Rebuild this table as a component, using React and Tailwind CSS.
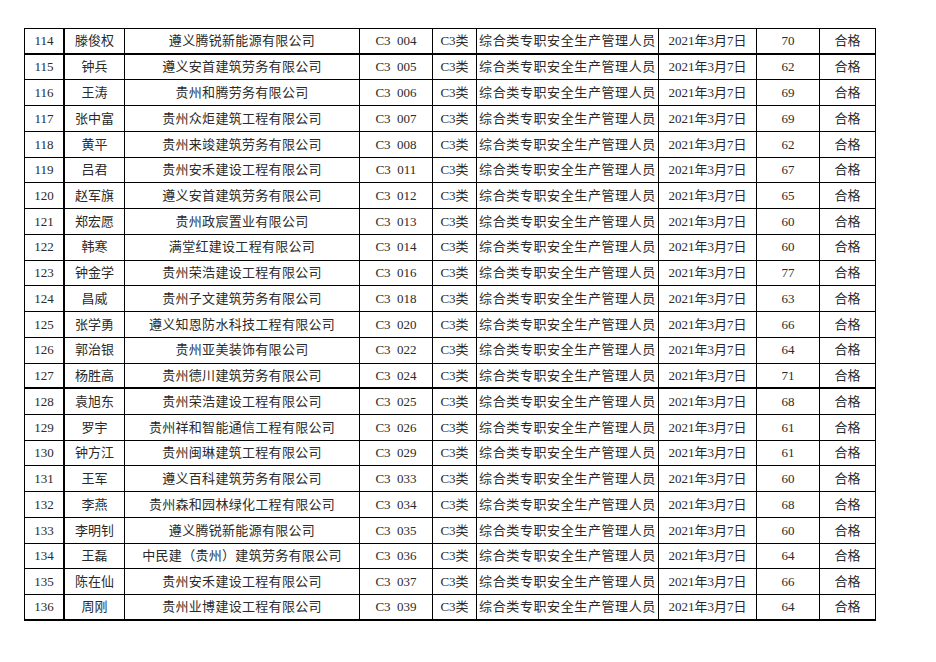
import React from "react";

const rows = [
  ["114", "滕俊权", "遵义腾锐新能源有限公司", "004", "70"],
  ["115", "钟兵", "遵义安首建筑劳务有限公司", "005", "62"],
  ["116", "王涛", "贵州和腾劳务有限公司", "006", "69"],
  ["117", "张中富", "贵州众炬建筑工程有限公司", "007", "69"],
  ["118", "黄平", "贵州来竣建筑劳务有限公司", "008", "62"],
  ["119", "吕君", "贵州安禾建设工程有限公司", "011", "67"],
  ["120", "赵军旗", "遵义安首建筑劳务有限公司", "012", "65"],
  ["121", "郑宏愿", "贵州政宸置业有限公司", "013", "60"],
  ["122", "韩寒", "满堂红建设工程有限公司", "014", "60"],
  ["123", "钟金学", "贵州荣浩建设工程有限公司", "016", "77"],
  ["124", "昌威", "贵州子文建筑劳务有限公司", "018", "63"],
  ["125", "张学勇", "遵义知恩防水科技工程有限公司", "020", "66"],
  ["126", "郭治银", "贵州亚美装饰有限公司", "022", "64"],
  ["127", "杨胜高", "贵州德川建筑劳务有限公司", "024", "71"],
  ["128", "袁旭东", "贵州荣浩建设工程有限公司", "025", "68"],
  ["129", "罗宇", "贵州祥和智能通信工程有限公司", "026", "61"],
  ["130", "钟方江", "贵州闽琳建筑工程有限公司", "029", "61"],
  ["131", "王军", "遵义百科建筑劳务有限公司", "033", "60"],
  ["132", "李燕", "贵州森和园林绿化工程有限公司", "034", "68"],
  ["133", "李明钊", "遵义腾锐新能源有限公司", "035", "60"],
  ["134", "王磊", "中民建（贵州）建筑劳务有限公司", "036", "64"],
  ["135", "陈在仙", "贵州安禾建设工程有限公司", "037", "66"],
  ["136", "周刚", "贵州业博建设工程有限公司", "039", "64"],
];

// rows followed by a heavier rule
const thick = ["114", "127", "136"];

export default function App() {
  return (
    <div
      className="w-[936px] h-[662px] bg-white pt-[28px] pl-[24px] text-[13px] text-[#2a2a2a] whitespace-nowrap"
      style={{ fontFamily: '"Liberation Serif", "Noto Sans CJK SC", serif' }}
    >
      <div className="w-[852px] border-l border-t border-black">
        {rows.map((r) => (
          <div
            key={r[0]}
            className={`flex h-[25.74px] border-black ${thick.includes(r[0]) ? "border-b-2" : "border-b"}`}
          >
            <div className="w-[40px] shrink-0 flex items-center justify-center border-r-2 border-black">{r[0]}</div>
            <div className="w-[60px] shrink-0 flex items-center justify-center border-r border-black">{r[1]}</div>
            <div className="w-[235px] shrink-0 flex items-center justify-center border-r border-black tracking-[0.3px]">{r[2]}</div>
            <div className="w-[73px] shrink-0 flex items-center justify-center border-r border-black whitespace-pre">{"C3  " + r[3]}</div>
            <div className="w-[44px] shrink-0 flex items-center justify-center border-r border-black">C3类</div>
            <div className="w-[182px] shrink-0 flex items-center justify-center border-r border-black">
              <span className="tracking-[0.6px]">综合类专职安全生产管理人员</span>
            </div>
            <div className="w-[98px] shrink-0 flex items-center justify-center border-r border-black">2021年3月7日</div>
            <div className="w-[63px] shrink-0 flex items-center justify-center border-r border-black">{r[4]}</div>
            <div className="w-[56px] shrink-0 flex items-center justify-center border-r border-black">合格</div>
          </div>
        ))}
      </div>
    </div>
  );
}
